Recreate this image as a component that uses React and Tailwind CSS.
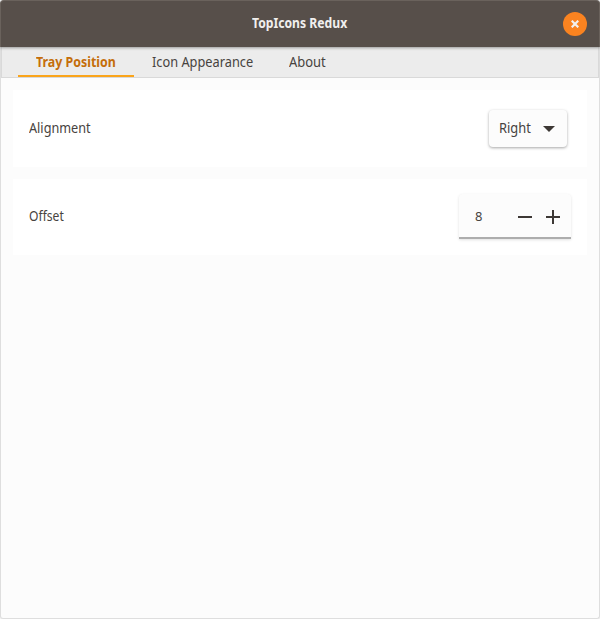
const tabs = [
  { label: "Tray Position", box: "w-[116px]", text: "w-[80px]", active: true, scale: "scale-x-[0.885]" },
  { label: "Icon Appearance", box: "w-[137px]", text: "w-[101px]", scale: "scale-x-[0.913]" },
  { label: "About", box: "w-[73px]", text: "w-[37px]", scale: "scale-x-[0.925]" },
];

function Label({ children, width, scale }) {
  return (
    <span className={`block whitespace-nowrap ${width}`}>
      <span className={`inline-block origin-left ${scale}`}>{children}</span>
    </span>
  );
}

function Row({ label, className, width, scale, children }) {
  return (
    <div className={`flex items-center justify-between bg-white pl-4 ${className}`}>
      <div className="-mt-0.5">
        <Label width={width} scale={scale}>{label}</Label>
      </div>
      {children}
    </div>
  );
}

export default function App() {
  return (
    <div className="h-[619px] w-[600px] bg-[#f4f4f4] font-['Noto_Sans',sans-serif] text-[14px] leading-5 text-[#474340]">
      <div className="flex h-full flex-col rounded-t-[4px] rounded-b-[3px] border-x border-b border-[#dedede] bg-[#fcfcfc]">
        <header className="relative z-10 -mx-px grid h-[47px] shrink-0 grid-cols-[1fr_95px_1fr] items-center rounded-t-[4px] border-x border-t border-[#6a625c] bg-[#574f4a] shadow-[0_1px_3px_rgba(0,0,0,0.35)]">
          <div />
          <div className="-mt-0.5 -ml-px font-bold text-[#f1efee]">
            <Label width="w-[95px]" scale="scale-x-[0.87]">TopIcons Redux</Label>
          </div>
          <button className="mr-3 flex size-6 items-center justify-center justify-self-end rounded-full bg-[#fa8320]" aria-label="Close">
            <svg width="8" height="8" viewBox="0 0 8 8" stroke="#f2f0ee" strokeWidth="2.2">
              <path d="M.7.7 7.3 7.3M7.3.7.7 7.3" />
            </svg>
          </button>
        </header>
        <nav className="flex h-[31px] shrink-0 border-x border-b border-[#d9d9d9] bg-[#ececec] pl-4">
          {tabs.map((t) => (
            <div key={t.label} className={`flex h-[30px] justify-center border-b-2 pt-[5px] ${t.box} ${t.active ? "border-[#faa41a] font-bold text-[#c46e0a]" : "border-transparent"}`}>
              <Label width={t.text} scale={t.scale}>{t.label}</Label>
            </div>
          ))}
        </nav>
        <main className="flex flex-col gap-3 px-3 pt-3">
          <Row label="Alignment" width="w-[62px]" scale="scale-x-[0.905]" className="h-[77px] pr-5">
            <button className="flex h-[37px] w-[78px] items-center justify-between rounded-[4px] bg-[#fcfcfc] pr-3 pl-2.5 shadow-[0_1px_3px_rgba(0,0,0,0.35)]">
              <div className="-mt-0.5">
                <Label width="w-8" scale="scale-x-[0.92]">Right</Label>
              </div>
              <svg width="12" height="6" viewBox="0 0 12 6" fill="#3d3835"><path d="M0 0H12L6 6Z" /></svg>
            </button>
          </Row>
          <Row label="Offset" width="w-[35px]" scale="scale-x-[0.865]" className="h-[76px] pr-4">
            <div className="-mt-0.5 flex h-[45px] w-[112px] items-center rounded-t-[4px] border-b-2 border-[#adadad] bg-[#fcfcfc] pl-4 shadow-[0_1px_3px_rgba(0,0,0,0.12)]">
              <span className="mt-0.5 w-[43px] text-[13px]">8</span>
              <svg className="mt-[3px]" width="42" height="14" viewBox="0 0 42 14" fill="#3d3835">
                <path d="M0 6H14V8H0ZM28 6H34V0H36V6H42V8H36V14H34V8H28Z" />
              </svg>
            </div>
          </Row>
        </main>
      </div>
    </div>
  );
}
